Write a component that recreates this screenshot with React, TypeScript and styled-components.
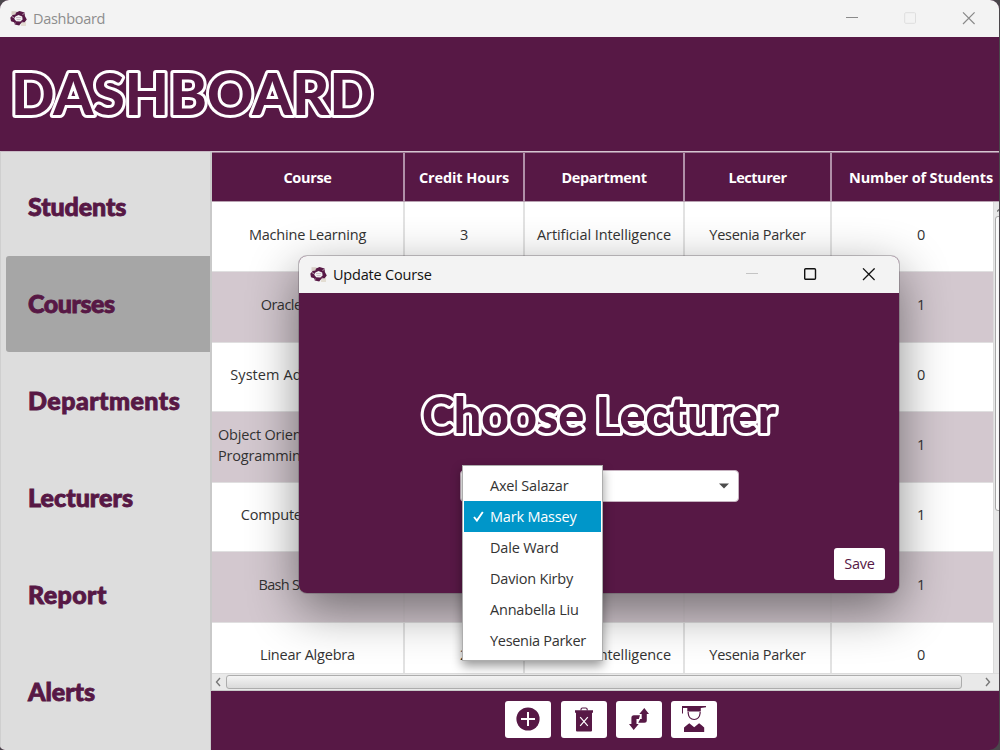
import React from 'react';
import styled, { createGlobalStyle, css } from 'styled-components';

const PLUM = '#571845';
const SANS = `"Open Sans", "Noto Sans", sans-serif`;

const GlobalStyle = createGlobalStyle`
  * { box-sizing: border-box; }
  html, body { margin: 0; padding: 0; background: #4a464b; overflow: hidden; }
  body { font-family: ${SANS}; font-size: 14.5px; letter-spacing: -0.2px; color: #333; }
  button { font: inherit; letter-spacing: inherit; border: 0; padding: 0; margin: 0; }
`;

const Window = styled.div`
  position: relative;
  display: flex;
  flex-direction: column;
  width: 999px;
  height: 750px;
  border-radius: 9px 9px 10px 5px;
  overflow: hidden;
  background: ${PLUM};
`;

const TitleBar = styled.div<{ $active?: boolean }>`
  display: flex;
  align-items: center;
  flex: none;
  height: 37px;
  padding-left: 10px;
  background: #f3f3f3;
  color: ${(p) => (p.$active ? '#111' : '#8d8d8d')};
`;

const TitleText = styled.span<{ $tracking: number }>`
  flex: 1;
  margin-left: 6px;
  letter-spacing: ${(p) => p.$tracking}px;
`;

const WindowControls = styled.div<{ $gap: number; $end: number }>`
  display: flex;
  align-items: center;
  gap: ${(p) => p.$gap}px;
  padding-right: ${(p) => p.$end}px;

  svg { display: block; }
`;

const Banner = styled.header`
  display: flex;
  flex: none;
  height: 114px;
  padding: 22px 0 0 6px;
`;

const OutlineSvg = styled.svg`
  display: block;
  overflow: visible;
  font-family: Lato, "Open Sans", sans-serif;
  font-weight: 900;
  letter-spacing: 0;

  text {
    fill: ${PLUM};
    stroke: #fff;
    stroke-linejoin: round;
    paint-order: stroke;
  }
`;

const Main = styled.div`
  display: flex;
  flex: 1;
  min-height: 0;
`;

const Sidebar = styled.nav`
  display: flex;
  flex-direction: column;
  gap: 1px;
  flex: none;
  width: 211px;
  padding: 7px 0 0 5px;
  border-top: 1px solid #c9bcc6;
  border-right: 1px solid #c9c9c9;
  border-left: 1px solid #cfcfcf;
  background: #dddddd;
`;

const NavItem = styled.a<{ $active?: boolean; $tracking: number }>`
  display: flex;
  align-items: center;
  flex: none;
  height: 96px;
  padding: 0 0 2px 22px;
  border-radius: 3px 0 0 3px;
  font: 900 25px Lato, "Open Sans", sans-serif;
  letter-spacing: ${(p) => p.$tracking}px;
  color: ${PLUM};
  -webkit-text-stroke: 0.9px ${PLUM};
  ${(p) => p.$active && css`background: #a6a6a6;`}
`;

const Content = styled.section`
  display: flex;
  flex-direction: column;
  flex: 1;
  min-width: 0;
`;

const Table = styled.div`
  display: flex;
  flex-direction: column;
  height: 540px;
  border-top: 1px solid #d5c6d0;
  border-left: 1px solid #c9c9c9;
  border-bottom: 1px solid #c8c8c8;
  overflow: hidden;
`;

const columns = css`
  display: grid;
  grid-template-columns: 193px 120px 160px 147px 178px;
`;

const HeadRow = styled.div`
  ${columns}
  flex: none;
  height: 50px;
  border-top: 1px solid #9a7490;
  border-bottom: 1px solid #b8a2b1;
  background: ${PLUM};
`;

const HeadCell = styled.div<{ $tracking: number }>`
  display: flex;
  align-items: center;
  justify-content: center;
  border-right: 2px solid #b08fa8;
  color: #fff;
  font-weight: 700;
  letter-spacing: ${(p) => p.$tracking}px;
  white-space: nowrap;

  &:last-child { border-right: 0; }
`;

const Viewport = styled.div`
  display: flex;
  flex: 1;
  min-height: 0;
`;

const Rows = styled.div`
  flex: 1;
  min-width: 0;
  overflow: hidden;
`;

const Row = styled.div<{ $alt: boolean }>`
  ${columns}
  height: ${(p) => (p.$alt ? 71 : 69)}px;
  border-bottom: 1px solid #e0dfe0;
  background: ${(p) => (p.$alt ? '#d3c8cf' : '#fff')};
  --divider: ${(p) => (p.$alt ? '#cfc5cb' : '#e2e2e2')};

  &:first-child { height: 70px; }
`;

const Cell = styled.div<{ $left?: boolean; $tracking?: number }>`
  display: flex;
  align-items: center;
  justify-content: ${(p) => (p.$left ? 'flex-start' : 'center')};
  padding: 0 0 ${(p) => (p.$left ? '4px 6px' : '5px 0')};
  border-right: 2px solid var(--divider);
  line-height: 21px;
  letter-spacing: ${(p) => p.$tracking ?? -0.2}px;
  white-space: pre;

  &:last-child { border-right: 0; }
`;

const VerticalTrack = styled.div`
  display: flex;
  flex-direction: column;
  flex: none;
  width: 6px;
  padding: 5px 0 0 1px;
  border-left: 1px solid #dadada;
  background: #e7e7e7;
  overflow: hidden;

  svg { flex: none; margin: 0 0 4px 2px; }
`;

const VerticalThumb = styled.div`
  flex: none;
  width: 12px;
  height: 295px;
  border: 1px solid #a9a9a9;
  border-radius: 3px;
  background: linear-gradient(90deg, #fdfdfd, #e4e4e4);
`;

const HorizontalTrack = styled.div`
  display: flex;
  align-items: center;
  flex: none;
  height: 17px;
  padding: 0 8px 0 3px;
  border-top: 1px solid #dcdcdc;
  background: #e9e9e9;
`;

const HorizontalThumb = styled.div`
  flex: 1;
  height: 14px;
  margin: 0 23px 0 5px;
  border: 1px solid #adadad;
  border-radius: 3px;
  background: linear-gradient(#f4f4f4, #dadada);
`;

const Toolbar = styled.footer`
  display: flex;
  gap: 9px;
  flex: 1;
  padding: 10px 0 0 294px;
`;

const ToolButton = styled.button`
  display: flex;
  align-items: center;
  justify-content: center;
  width: 46px;
  height: 37px;
  border-radius: 3px;
  background: #fff;

  &:first-child { margin-right: 1px; }
  svg { margin-top: -1px; }
`;

const Dialog = styled.div`
  position: absolute;
  left: 299px;
  top: 256px;
  display: flex;
  flex-direction: column;
  width: 600px;
  height: 337px;
  border-radius: 8px;
  background: ${PLUM};
  box-shadow: 0 0 0 1px rgba(90, 80, 88, 0.35), 0 16px 50px rgba(0, 0, 0, 0.47);

  ${TitleBar} { border-radius: 8px 8px 0 0; padding-left: 11px; }
`;

const DialogBody = styled.div`
  display: flex;
  flex-direction: column;
  align-items: center;
  flex: 1;
  padding-top: 96px;
`;

const Combo = styled.div`
  display: flex;
  align-items: center;
  justify-content: flex-end;
  flex: none;
  width: 279px;
  height: 32px;
  margin: 25px 0 0 0;
  padding-right: 9px;
  border: 1px solid #c6b2c0;
  border-radius: 4px;
  background: #fff;
`;

const SaveButton = styled.button`
  align-self: flex-end;
  width: 51px;
  height: 32px;
  margin: 46px 14px 0 0;
  padding-bottom: 2px;
  border-radius: 3px;
  background: #fff;
  color: ${PLUM};
`;

const Menu = styled.ul`
  position: absolute;
  left: 462px;
  top: 465px;
  width: 141px;
  height: 196px;
  margin: 0;
  padding: 4px 1px;
  list-style: none;
  border: 1px solid #adadad;
  background: #fff;
  box-shadow: 0 5px 10px rgba(0, 0, 0, 0.4);
`;

const MenuItem = styled.li<{ $selected: boolean; $tracking: number }>`
  display: flex;
  align-items: center;
  height: 31px;
  letter-spacing: ${(p) => p.$tracking}px;
  white-space: nowrap;
  color: ${(p) => (p.$selected ? '#fff' : '#333')};
  background: ${(p) => (p.$selected ? '#0096c9' : 'transparent')};
`;

const CheckSlot = styled.span`
  display: flex;
  justify-content: center;
  width: 26px;
  padding-left: 3px;
`;

const Logo = () => (
  <svg width="17" height="17" viewBox="0 0 17 17">
    <rect x="1.5" y="1.2" width="5" height="4" fill="#d8cfc6" />
    <rect x="11" y="11.5" width="5" height="4.5" fill="#e3ddd2" />
    <path
      fill={PLUM}
      fillRule="evenodd"
      d="M6 2.4 L9.5 1 L14.6 2.6 L14.9 6 L16.8 9.4 L14.6 12.2 L11.6 12.6 L9.2 15.4 L4.8 14.4 L4 12.2 L1 11.2 L0.3 7.8 L2.6 5 L5.4 4.6 Z M8.5 5 L5.4 6.4 L4.2 8.8 L6.2 11.2 L10.4 11.4 L12.6 9.4 L12.2 6.6 Z"
    />
    <path d="M6 7.6h5.2M6.6 9.6h4" stroke="#b9a9b4" strokeWidth="0.8" />
    <path d="M1.8 6.6l2.6 1.2M12.4 4.4l2.2-1M11.8 12l2 .8M5.2 12.6l-.6 1.6" stroke="#cdbcc8" strokeWidth="0.8" />
  </svg>
);

const Minimize = ({ color }: { color: string }) => (
  <svg width="13" height="13" viewBox="0 0 13 13"><path d="M0 5.5h12" stroke={color} strokeWidth="1" /></svg>
);
const Maximize = ({ color, width = 1 }: { color: string; width?: number }) => (
  <svg width="13" height="13" viewBox="0 0 13 13">
    <rect x=".7" y=".7" width="10.8" height="10.6" rx="1" fill="none" stroke={color} strokeWidth={width} />
  </svg>
);
const Close = ({ color, width = 1 }: { color: string; width?: number }) => (
  <svg width="13" height="13" viewBox="0 0 13 13">
    <path d="M1 .4l11.6 11.6M12.6.4L1 12" stroke={color} strokeWidth={width} />
  </svg>
);

const AddIcon = () => (
  <svg width="24" height="24" viewBox="0 0 24 24">
    <circle cx="12" cy="12" r="11.6" fill={PLUM} />
    <path d="M12 5v14M5 12h14" stroke="#fff" strokeWidth="2" />
  </svg>
);
const DeleteIcon = () => (
  <svg width="18" height="25" viewBox="0 0 18 25">
    <path d="M6 3.5V2.4Q6 1 7.4 1h3.4Q12.2 1 12.2 2.4V3.5" fill="none" stroke={PLUM} strokeWidth="1.1" />
    <path d="M0 3.2h18v2.6H0zM1 5h16v18.6q0 1-1 1H2q-1 0-1-1z" fill={PLUM} />
    <path d="M5.2 10.2l7.6 8.6M12.8 10.2l-7.6 8.6" stroke="#fff" strokeWidth="1.2" />
  </svg>
);
const SwapIcon = () => (
  <svg width="20" height="22" viewBox="0 0 20 22">
    <path fill={PLUM} d="M15.3 0l4.7 6h-2.2v6.3q0 2.500-2.500 2.500H9.200l2-3.900h1.500V6H10.300z" />
    <path fill={PLUM} d="M4.7 22L0 16h2.400V9.700q0-2.500 2.500-2.500h6.100l-1.200 3.900H7.500V16h2.200z" />
  </svg>
);
const GraduateIcon = () => (
  <svg width="24" height="27" viewBox="0 0 24 27">
    <path d="M0 0h24v1.200l-5.200.8v3.600H5.300V2H1v5.500H0z" fill={PLUM} />
    <path d="M6.2 6v1.200q.6 6 6 6.300 5.200-.3 5.900-6.300V6" fill="none" stroke={PLUM} strokeWidth="1.2" />
    <path d="M2 26v-4.5q1-1 5.300-4.300l4.900 4 4.900-4q4.300 3.300 5.100 4.300V26z" fill={PLUM} />
  </svg>
);

const NAV: [string, number][] = [
  ['Students', -0.1],
  ['Courses', -0.45],
  ['Departments', 0.45],
  ['Lecturers', 0.05],
  ['Report', 0.4],
  ['Alerts', -0.05],
];

const HEADINGS: [string, number][] = [
  ['Course', -0.35],
  ['Credit Hours', -0.1],
  ['Department', -0.35],
  ['Lecturer', -0.45],
  ['Number of Students', -0.15],
];

interface Course {
  name: string;
  hours: number;
  department?: string;
  students: number;
  left?: boolean;
  tracking?: number;
}

const COURSES: Course[] = [
  { name: 'Machine Learning', hours: 3, students: 0 },
  { name: 'Oracle Queries', hours: 3, students: 1, tracking: -0.5 },
  { name: 'System Administration', hours: 3, students: 0, tracking: 0.08 },
  { name: 'Object Oriented\nProgramming', hours: 3, students: 1, left: true },
  { name: 'Computer Networks', hours: 3, students: 1 },
  { name: 'Bash Shell Tools', hours: 3, department: 'Data Science', students: 1, tracking: -0.7 },
  { name: 'Linear Algebra', hours: 2, students: 0 },
];

const LECTURERS: [string, number][] = [
  ['Axel Salazar', -0.2],
  ['Mark Massey', -0.2],
  ['Dale Ward', -0.2],
  ['Davion Kirby', -0.2],
  ['Annabella Liu', -0.2],
  ['Yesenia Parker', -0.3],
];

export default function App() {
  return (
    <>
      <GlobalStyle />
      <Window>
        <TitleBar>
          <Logo />
          <TitleText $tracking={-0.3}>Dashboard</TitleText>
          <WindowControls $gap={45} $end={24}>
            <Minimize color="#8a8a8a" />
            <Maximize color="#dedede" />
            <Close color="#8a8a8a" width={1.2} />
          </WindowControls>
        </TitleBar>
        <Banner>
          <OutlineSvg width="370" height="70">
            <text x="5" y="55.5" fontSize="58" strokeWidth="6" textLength="362" lengthAdjust="spacingAndGlyphs">DASHBOARD</text>
          </OutlineSvg>
        </Banner>
        <Main>
          <Sidebar>
            {NAV.map(([label, tracking]) => (
              <NavItem key={label} $active={label === 'Courses'} $tracking={tracking}>{label}</NavItem>
            ))}
          </Sidebar>
          <Content>
            <Table>
              <HeadRow>
                {HEADINGS.map(([label, tracking]) => (
                  <HeadCell key={label} $tracking={tracking}>{label}</HeadCell>
                ))}
              </HeadRow>
              <Viewport>
                <Rows>
                  {COURSES.map((c, i) => (
                    <Row key={c.name} $alt={i % 2 === 1}>
                      <Cell $left={c.left} $tracking={c.tracking}>{c.name}</Cell>
                      <Cell>{c.hours}</Cell>
                      <Cell $tracking={-0.08}>{c.department ?? 'Artificial Intelligence'}</Cell>
                      <Cell $tracking={-0.27}>Yesenia Parker</Cell>
                      <Cell>{c.students}</Cell>
                    </Row>
                  ))}
                </Rows>
                <VerticalTrack>
                  <svg width="8" height="5" viewBox="0 0 8 5"><path d="M0 4.5L4 1l4 3.5" fill="none" stroke="#777" strokeWidth="1.4" /></svg>
                  <VerticalThumb />
                </VerticalTrack>
              </Viewport>
              <HorizontalTrack>
                <svg width="6" height="10" viewBox="0 0 6 10"><path d="M5 1L1.5 5L5 9" fill="none" stroke="#777" strokeWidth="1.4" /></svg>
                <HorizontalThumb />
                <svg width="6" height="10" viewBox="0 0 6 10"><path d="M1 1l3.5 4L1 9" fill="none" stroke="#777" strokeWidth="1.4" /></svg>
              </HorizontalTrack>
            </Table>
            <Toolbar>
              <ToolButton aria-label="Add"><AddIcon /></ToolButton>
              <ToolButton aria-label="Delete"><DeleteIcon /></ToolButton>
              <ToolButton aria-label="Update"><SwapIcon /></ToolButton>
              <ToolButton aria-label="Students"><GraduateIcon /></ToolButton>
            </Toolbar>
          </Content>
        </Main>

        <Dialog>
          <TitleBar $active>
            <Logo />
            <TitleText $tracking={-0.2}>Update Course</TitleText>
            <WindowControls $gap={45} $end={24}>
              <Minimize color="#c4c4c4" />
              <Maximize color="#111" width={1.4} />
              <Close color="#111" width={1.3} />
            </WindowControls>
          </TitleBar>
          <DialogBody>
            <OutlineSvg width="356" height="56">
              <text x="1" y="44" fontSize="48.5" strokeWidth="6" textLength="354">Choose Lecturer</text>
            </OutlineSvg>
            <Combo>
              <svg width="10" height="6" viewBox="0 0 10 6"><path d="M0 .5h10L5 5.500z" fill="#4d4d4d" /></svg>
            </Combo>
            <SaveButton>Save</SaveButton>
          </DialogBody>
        </Dialog>

        <Menu>
          {LECTURERS.map(([name, tracking]) => (
            <MenuItem key={name} $selected={name === 'Mark Massey'} $tracking={tracking}>
              <CheckSlot>
                {name === 'Mark Massey' && (
                  <svg width="11" height="11" viewBox="0 0 11 11">
                    <path d="M1 6l2.9 3.6L9.8 1" fill="none" stroke="#fff" strokeWidth="1.9" />
                  </svg>
                )}
              </CheckSlot>
              {name}
            </MenuItem>
          ))}
        </Menu>
      </Window>
    </>
  );
}
